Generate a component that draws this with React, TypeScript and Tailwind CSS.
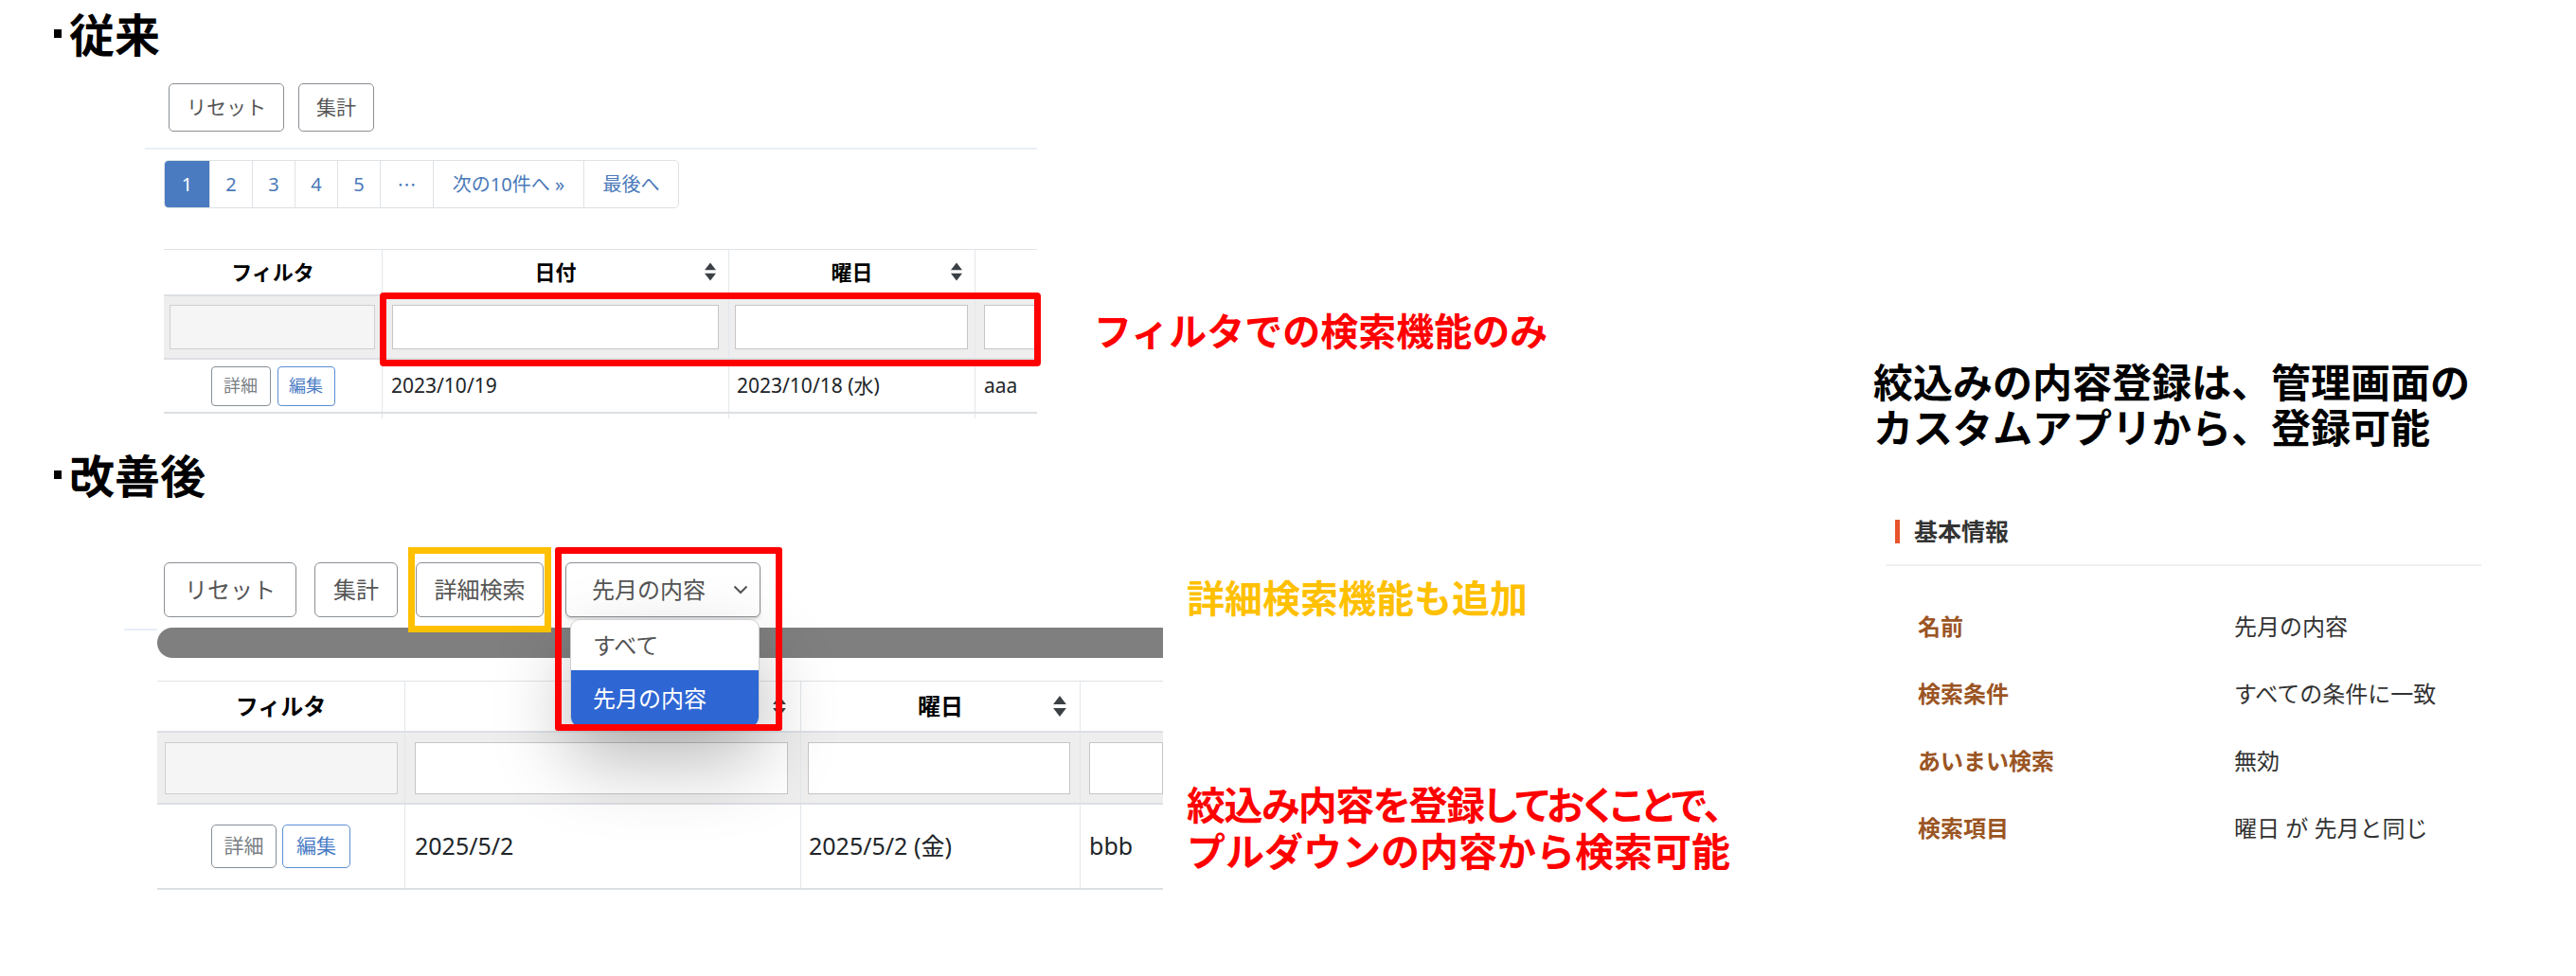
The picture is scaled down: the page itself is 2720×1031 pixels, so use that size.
import React from 'react';

const ui = "font-['Noto_Sans','Noto_Sans_CJK_JP',sans-serif]";
const jp = "font-['Noto_Sans_CJK_JP',sans-serif]";

const SortIcon: React.FC<{ className?: string }> = ({ className }) => (
  <svg viewBox="0 0 10 16" className={className} fill="#3b4045">
    <path d="M5 0 L10 6.6 H0 Z" />
    <path d="M5 16 L0 9.4 H10 Z" />
  </svg>
);

const Chevron: React.FC = () => (
  <svg viewBox="0 0 16 10" className="w-[16px] h-[10px]" fill="none" stroke="#555" strokeWidth="2">
    <polyline points="1.5,1.5 8,8 14.5,1.5" />
  </svg>
);

// 見出し「・従来」「・改善後」
const Heading: React.FC<{ label: string; className?: string }> = ({ label, className }) => (
  <div className={`${jp} flex items-center font-bold text-[48px] leading-[48px] text-black pl-[57px] ${className ?? ''}`}>
    <span className="inline-block w-[8px] h-[9px] bg-black mr-[8px] mt-[2px]" />
    {label}
  </div>
);

const OldScreen: React.FC = () => (
  <div className={`${ui} relative ml-[153px] w-[942px]`}>
    <div className="flex gap-[15px] pl-[25px]">
      <button className="h-[51px] w-[122px] rounded-[5px] border-[1.5px] border-[#8a8f94] bg-white text-[21px] text-[#555]">リセット</button>
      <button className="h-[51px] w-[80px] rounded-[5px] border-[1.5px] border-[#8a8f94] bg-white text-[21px] text-[#555]">集計</button>
    </div>
    <div className="mt-[17px] h-[2px] bg-[#e9eff6]" />
    <div className="mt-[11px] ml-[20px] flex h-[51px] w-fit overflow-hidden rounded-[5px] border border-[#dee2e6] text-[20px] text-[#4a79b9]">
      <div className="flex w-[47px] items-center justify-center bg-[#4a7bc0] text-white">1</div>
      <div className="flex w-[45px] items-center justify-center border-l border-[#dee2e6]">2</div>
      <div className="flex w-[45px] items-center justify-center border-l border-[#dee2e6]">3</div>
      <div className="flex w-[45px] items-center justify-center border-l border-[#dee2e6]">4</div>
      <div className="flex w-[45px] items-center justify-center border-l border-[#dee2e6]">5</div>
      <div className={`${jp} flex w-[56px] items-center justify-center border-l border-[#dee2e6]`}>…</div>
      <div className="flex w-[159px] items-center justify-center border-l border-[#dee2e6]">次の10件へ »</div>
      <div className="flex w-[100px] items-center justify-center border-l border-[#dee2e6]">最後へ</div>
    </div>

    <div className="mt-[43px] ml-[20px] w-[922px] overflow-hidden border-t-[1.5px] border-[#dfe3e8]">
      <div className="grid grid-cols-[230px_366px_260px_66px] h-[47px] text-[22px] font-bold text-black">
        <div className="flex items-center justify-center">フィルタ</div>
        <div className="relative flex items-center justify-center border-l border-[#e3e7eb]">
          日付
          <SortIcon className="absolute right-[13px] top-[13px] w-[12px] h-[20px]" />
        </div>
        <div className="relative flex items-center justify-center border-l border-[#e3e7eb]">
          曜日
          <SortIcon className="absolute right-[13px] top-[13px] w-[12px] h-[20px]" />
        </div>
        <div className="border-l border-[#e3e7eb]" />
      </div>
      <div className="grid grid-cols-[230px_366px_260px_66px] h-[69px] border-y-[2px] border-[#dcdfe3] bg-[#eeeeee]">
        <div className="flex items-center pl-[6px] pr-[7px]"><div className="h-[47px] w-full border-[1.5px] border-[#cfcfcf] bg-[#f5f5f5]" /></div>
        <div className="flex items-center pl-[10px] pr-[10px] border-l border-[#e3e7eb]"><div className="h-[47px] w-full border-[1.5px] border-[#c6c6c6] bg-white" /></div>
        <div className="flex items-center pl-[6px] pr-[7px] border-l border-[#e3e7eb]"><div className="h-[47px] w-full border-[1.5px] border-[#c6c6c6] bg-white" /></div>
        <div className="flex items-center pl-[9px] border-l border-[#e3e7eb]"><div className="h-[47px] w-full border-[1.5px] border-[#c6c6c6] bg-white" /></div>
      </div>
      <div className="grid grid-cols-[230px_366px_260px_66px] h-[57px] border-b-[2px] border-[#dcdfe3] text-[21px] text-[#212529]">
        <div className="flex items-center justify-center gap-[7px]">
          <button className="h-[42px] w-[63px] rounded-[4px] border-[1.5px] border-[#868e96] bg-white text-[18px] text-[#7a7f85]">詳細</button>
          <button className="h-[42px] w-[61px] rounded-[4px] border-[1.5px] border-[#5b8ed4] bg-white text-[18px] text-[#4a7cc4]">編集</button>
        </div>
        <div className="flex items-center pl-[9px] border-l border-[#e3e7eb]">2023/10/19</div>
        <div className="flex items-center pl-[8px] border-l border-[#e3e7eb]">2023/10/18 (水)</div>
        <div className="flex items-center pl-[9px] border-l border-[#e3e7eb]">aaa</div>
      </div>
      <div className="grid grid-cols-[230px_366px_260px_66px] h-[5px]">
        <div />
        <div className="border-l border-[#e3e7eb]" />
        <div className="border-l border-[#e3e7eb]" />
        <div className="border-l border-[#e3e7eb]" />
      </div>
    </div>

    <div className="absolute left-[248px] top-[221px] h-[78px] w-[698px] rounded-[4px] border-[7px] border-[#ff0000]" />
  </div>
);

const NewScreen: React.FC = () => (
  <div className={`${ui} relative ml-[131px] w-[1097px]`}>
    <div className="flex gap-[19px] pl-[42px]">
      <button className="h-[58px] w-[140px] rounded-[6px] border-[1.5px] border-[#8a8f94] bg-white text-[24px] text-[#555]">リセット</button>
      <button className="h-[58px] w-[88px] rounded-[6px] border-[1.5px] border-[#8a8f94] bg-white text-[24px] text-[#555]">集計</button>
      <button className="h-[58px] w-[135px] rounded-[6px] border-[1.5px] border-[#8a8f94] bg-white text-[24px] text-[#555]">詳細検索</button>
      <div className="ml-[4px] flex h-[58px] w-[206px] items-center justify-between rounded-[6px] border-[1.5px] border-[#8a8f94] bg-white pl-[27px] pr-[12px] text-[24px] text-[#555] shadow-[0_2px_3px_rgba(0,0,0,0.15)]">
        先月の内容
        <Chevron />
      </div>
    </div>

    <div className="mt-[11px] flex items-start">
      <div className="mt-[1px] h-[2px] w-[35px] bg-[#e6eef7]" />
      <div className="h-[32px] flex-1 rounded-l-full bg-[#7f7f7f]" />
    </div>

    <div className="mt-[24px] ml-[35px] w-[1062px] overflow-hidden border-t-[1.5px] border-[#dfe3e8]">
      <div className="grid grid-cols-[261px_418px_295px_88px] h-[52px] text-[24px] font-bold text-black">
        <div className="flex items-center justify-center">フィルタ</div>
        <div className="relative flex items-center justify-center border-l border-[#e3e7eb]">
          日付
          <SortIcon className="absolute right-[15px] top-[15px] w-[14px] h-[22px]" />
        </div>
        <div className="relative flex items-center justify-center border-l border-[#e3e7eb]">
          曜日
          <SortIcon className="absolute right-[14px] top-[15px] w-[14px] h-[22px]" />
        </div>
        <div className="border-l border-[#e3e7eb]" />
      </div>
      <div className="grid grid-cols-[261px_418px_295px_88px] h-[78px] border-y-[2px] border-[#dcdfe3] bg-[#eeeeee]">
        <div className="flex items-center pl-[8px] pr-[7px]"><div className="h-[55px] w-full border-[1.5px] border-[#cfcfcf] bg-[#f5f5f5]" /></div>
        <div className="flex items-center pl-[10px] pr-[13px] border-l border-[#e3e7eb]"><div className="h-[55px] w-full border-[1.5px] border-[#c6c6c6] bg-white" /></div>
        <div className="flex items-center pl-[7px] pr-[10px] border-l border-[#e3e7eb]"><div className="h-[55px] w-full border-[1.5px] border-[#c6c6c6] bg-white" /></div>
        <div className="flex items-center pl-[9px] border-l border-[#e3e7eb]"><div className="h-[55px] w-full border-[1.5px] border-[#c6c6c6] bg-white" /></div>
      </div>
      <div className="grid grid-cols-[261px_418px_295px_88px] h-[90px] border-b-[2px] border-[#dcdfe3] text-[25px] text-[#212529]">
        <div className="flex items-center justify-center gap-[6px]">
          <button className="h-[46px] w-[69px] rounded-[5px] border-[1.5px] border-[#868e96] bg-white text-[21px] text-[#7a7f85]">詳細</button>
          <button className="h-[46px] w-[72px] rounded-[5px] border-[1.5px] border-[#5b8ed4] bg-white text-[21px] text-[#4a7cc4]">編集</button>
        </div>
        <div className="flex items-center pl-[10px] border-l border-[#e3e7eb]">2025/5/2</div>
        <div className="flex items-center pl-[8px] border-l border-[#e3e7eb]">2025/5/2 (金)</div>
        <div className="flex items-center pl-[9px] border-l border-[#e3e7eb]">bbb</div>
      </div>
    </div>

    {/* dropdown */}
    <div className="absolute left-[471px] top-[60px] z-10 w-[200px] overflow-hidden rounded-[10px] border border-[#cfcfcf] bg-white text-[24px] shadow-[0_35px_80px_rgba(0,0,0,0.28)]">
      <div className="flex h-[53px] items-center pl-[23px] text-[#555]">すべて</div>
      <div className="flex h-[59px] items-center pl-[23px] bg-[#2e66d4] text-white">先月の内容</div>
    </div>

    <div className="absolute left-[300px] top-[-16px] z-20 h-[90px] w-[151px] border-[7px] border-[#ffc000]" />
    <div className="absolute left-[455px] top-[-16px] z-20 h-[194px] w-[240px] rounded-[3px] border-[7px] border-[#ff0000]" />
  </div>
);

const InfoRow: React.FC<{ label: string; value: string }> = ({ label, value }) => (
  <div className="flex h-[71px] items-center pl-[34px] text-[24px]">
    <div className="w-[334px] font-bold text-[#9b5524]">{label}</div>
    <div className="text-[#333]">{value}</div>
  </div>
);

export default function App() {
  return (
    <div className={`${jp} flex h-[1031px] w-[2720px] overflow-hidden bg-white`}>
      <div className="w-[1960px] shrink-0 pt-[10px]">
        <Heading label="従来" />
        <div className="mt-[30px] flex items-start">
          <OldScreen />
          <div className="ml-[60px] mt-[236px] text-[40px] font-bold leading-[48px] text-[#ff0000]">フィルタでの検索機能のみ</div>
        </div>

        <Heading label="改善後" className="mt-[34px]" />
        <div className="mt-[70px] flex items-start">
          <NewScreen />
          <div className="ml-[25px]">
            <div className="mt-[12px] text-[40px] font-bold leading-[48px] text-[#ffc000]">詳細検索機能も追加</div>
            <div className="mt-[170px] text-[41px] font-bold leading-[49px] text-[#ff0000]">
              <span className="tracking-[-1.5px] [font-feature-settings:'palt']">絞込み内容を登録しておくことで、</span>
              <br />
              プルダウンの内容から検索可能
            </div>
          </div>
        </div>
      </div>

      <div className="ml-[18px] pt-[378px]">
        <div className="text-[42px] font-bold leading-[48px] text-black">
          絞込みの内容登録は、管理画面の
          <br />
          カスタムアプリから、登録可能
        </div>
        <div className={`${ui} mt-[72px] w-[629px] ml-[13px]`}>
          <div className="flex items-center border-b-[2px] border-[#f1f1f1] pb-[20px] pl-[10px]">
            <span className="mr-[15px] h-[25px] w-[5px] bg-[#e8532b]" />
            <span className="text-[25px] font-bold leading-[30px] text-[#333]">基本情報</span>
          </div>
          <div className="mt-[28px]">
            <InfoRow label="名前" value="先月の内容" />
            <InfoRow label="検索条件" value="すべての条件に一致" />
            <InfoRow label="あいまい検索" value="無効" />
            <InfoRow label="検索項目" value="曜日 が 先月と同じ" />
          </div>
        </div>
      </div>
    </div>
  );
}
